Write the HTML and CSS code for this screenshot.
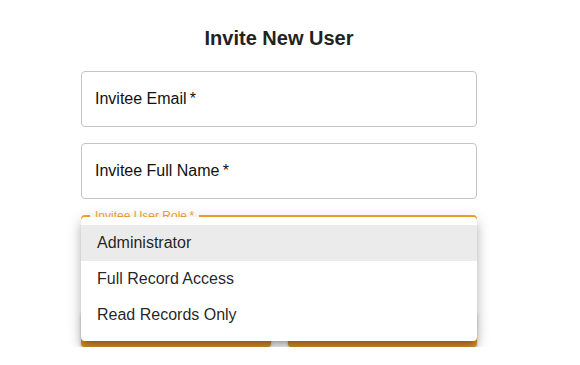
FILE: index.html
```html
<!DOCTYPE html>
<html>
<head>
<meta charset="utf-8">
<link rel="stylesheet" href="styles.css">
</head>
<body>
<div class="form">
  <h2 class="title">Invite New User</h2>
  <div class="field"><span class="field-label">Invitee Email&thinsp;*</span></div>
  <div class="field"><span class="field-label">Invitee Full Name&thinsp;*</span></div>
  <div class="field field-focused"><span class="legend">Invitee User Role&thinsp;*</span></div>
  <div class="actions">
    <button class="btn" aria-label="Cancel"></button>
    <button class="btn" aria-label="Send Invite"></button>
  </div>
  <ul class="menu">
    <li class="menu-item selected">Administrator</li>
    <li class="menu-item">Full Record Access</li>
    <li class="menu-item">Read Records Only</li>
  </ul>
</div>
</body>
</html>
```

FILE: styles.css
```css
html, body {
  margin: 0;
  padding: 0;
  background: #fff;
  font-family: "Liberation Sans", Arial, sans-serif;
}
.form {
  position: relative;
  width: 396px;
  margin-left: 81px;
  padding-top: 26px;
  display: flex;
  flex-direction: column;
  gap: 16px;
}
.title {
  margin: 0 0 5px 0;
  font-size: 20px;
  line-height: 24px;
  font-weight: bold;
  text-align: center;
  color: #222;
}
.field {
  position: relative;
  box-sizing: border-box;
  height: 56px;
  border: 1px solid #c4c4c4;
  border-radius: 4px;
  padding: 0 13px;
  display: flex;
  align-items: center;
}
.field-label {
  font-size: 16px;
  color: #111;
}
.field-focused {
  border: 2px solid #f5a42c;
}
.legend {
  position: absolute;
  left: 7px;
  top: -8px;
  padding: 0 5px;
  background: #fff;
  font-size: 12px;
  line-height: 14px;
  color: #f5a42c;
}
.actions {
  display: flex;
  gap: 17px;
  margin-top: 24px;
}
.btn {
  flex: 1;
  height: 36px;
  border: none;
  border-radius: 4px;
  background: #df9326;
  box-shadow: 0 3px 1px -2px rgba(0,0,0,0.2), 0 2px 2px 0 rgba(0,0,0,0.14), 0 1px 5px 0 rgba(0,0,0,0.12);
}
.menu {
  position: absolute;
  top: 217px;
  left: 0;
  width: 396px;
  margin: 0;
  padding: 8px 0;
  list-style: none;
  background: #fff;
  border-radius: 4px;
  box-shadow: 0 5px 5px -3px rgba(0,0,0,0.2), 0 8px 10px 1px rgba(0,0,0,0.14), 0 3px 14px 2px rgba(0,0,0,0.12);
}
.menu-item {
  height: 36px;
  padding: 0 16px;
  display: flex;
  align-items: center;
  font-size: 16px;
  color: rgba(0,0,0,0.87);
}
.selected {
  background: #ebebeb;
}
```
